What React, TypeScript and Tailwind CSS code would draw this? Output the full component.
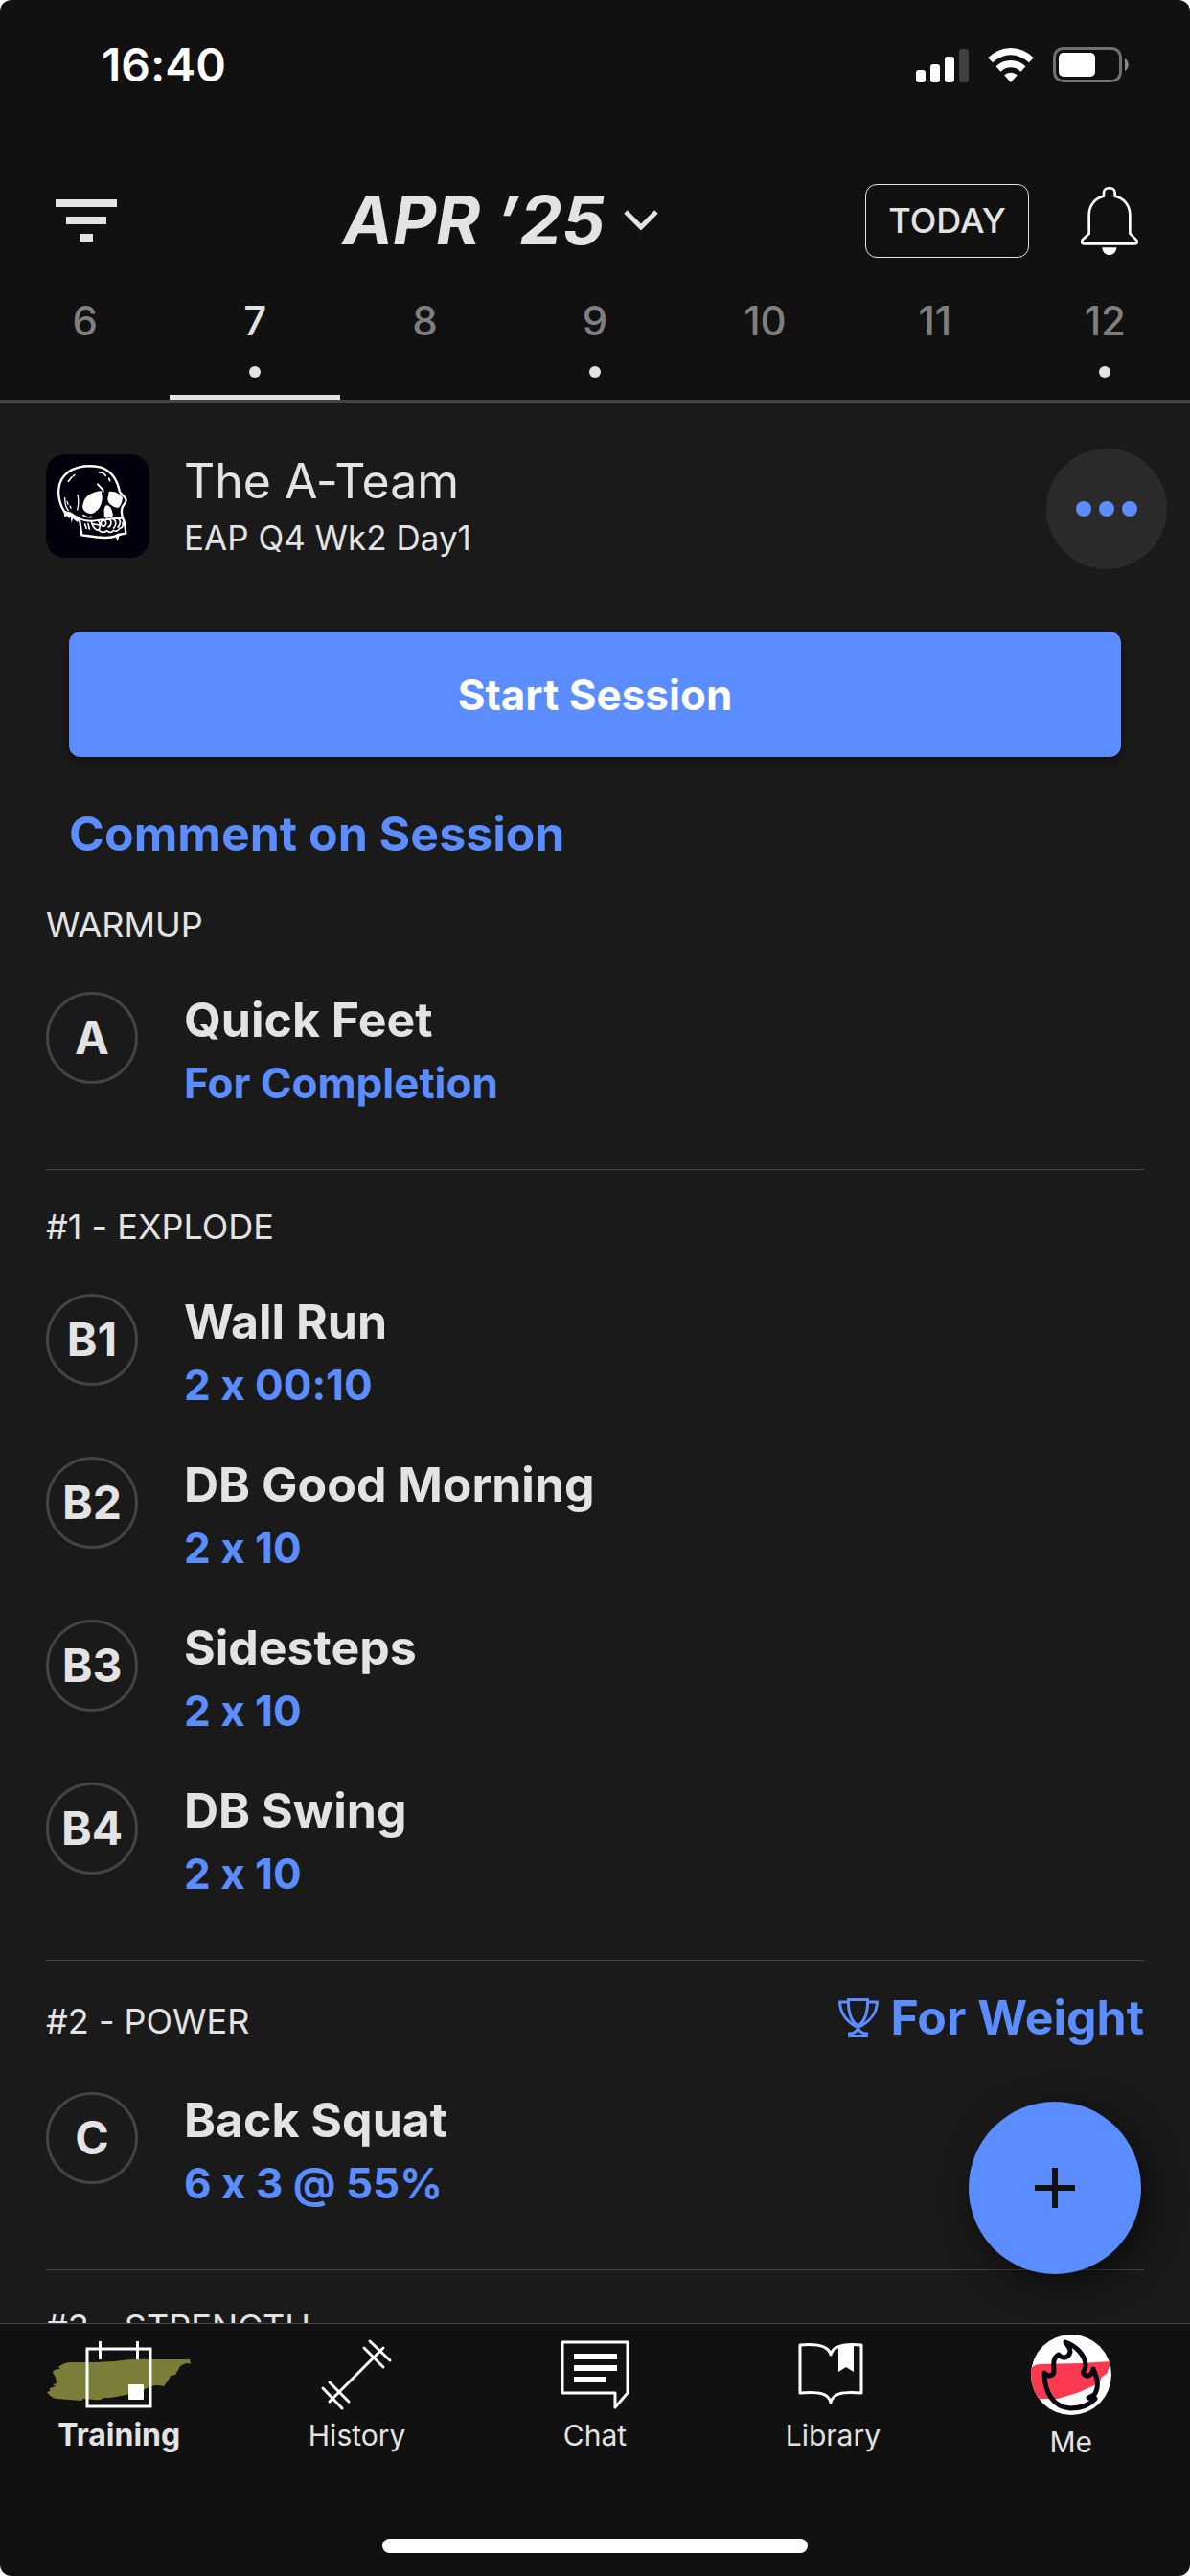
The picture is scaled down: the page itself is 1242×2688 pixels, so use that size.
import React, { useState } from 'react';

interface Exercise {
  code: string;
  name: string;
  detail: string;
}

interface Block {
  title: string;
  goal?: string;
  exercises: Exercise[];
}

const days = [
  { day: 6, hasSession: false },
  { day: 7, hasSession: true },
  { day: 8, hasSession: false },
  { day: 9, hasSession: true },
  { day: 10, hasSession: false },
  { day: 11, hasSession: false },
  { day: 12, hasSession: true },
];

const blocks: Block[] = [
  {
    title: 'WARMUP',
    exercises: [{ code: 'A', name: 'Quick Feet', detail: 'For Completion' }],
  },
  {
    title: '#1 - EXPLODE',
    exercises: [
      { code: 'B1', name: 'Wall Run', detail: '2 x 00:10' },
      { code: 'B2', name: 'DB Good Morning', detail: '2 x 10' },
      { code: 'B3', name: 'Sidesteps', detail: '2 x 10' },
      { code: 'B4', name: 'DB Swing', detail: '2 x 10' },
    ],
  },
  {
    title: '#2 - POWER',
    goal: 'For Weight',
    exercises: [{ code: 'C', name: 'Back Squat', detail: '6 x 3 @ 55%' }],
  },
  { title: '#3 - STRENGTH', exercises: [] },
];

function StatusBar() {
  return (
    <div className="flex h-[136px] shrink-0 items-center justify-between pl-[106px] pr-16 text-white">
      <span className="text-[48px] font-semibold leading-none">16:40</span>
      <div className="flex items-center gap-5">
        <svg width="55" height="36" viewBox="0 0 55 36" fill="currentColor">
          <rect x="0" y="23" width="10" height="13" rx="3" />
          <rect x="15" y="17" width="10" height="19" rx="3" />
          <rect x="30" y="9" width="10" height="27" rx="3" />
          <rect x="45" y="1" width="10" height="35" rx="3" fill="#404040" />
        </svg>
        <svg width="48" height="36" viewBox="395 57 143 108" fill="currentColor">
          <path d="M395 88 Q425 58 466 57 Q508 58 538 88 L523 103 Q498 80 466 79 Q435 80 410 103 Z" />
          <path d="M420 115 Q440 96 466 96 Q493 96 513 115 L498 131 Q484 118 466 118 Q449 118 435 131 Z" />
          <path d="M446 142 Q454 134 466 134 Q478 134 487 142 L466 165 Z" />
        </svg>
        <svg width="79" height="38" viewBox="0 0 79 38">
          <rect x="1.5" y="1.5" width="69" height="34" rx="9" fill="none" stroke="#717171" strokeWidth="3" />
          <rect x="6" y="6" width="38" height="25" rx="5" fill="#fff" />
          <path d="M75 12 C80 15 80 22 75 25 Z" fill="#8a8a8a" />
        </svg>
      </div>
    </div>
  );
}

function BellIcon() {
  return (
    <svg width="60" height="71" viewBox="684 498 180 213" fill="none">
      <path
        d="M756 527 V516 C756 497 791 497 791 516 V527 C819 533 838 556 838 586 V644 L858 664 C862 670 861 676 854 676 H694 C686 676 686 670 689 664 L710 644 V586 C710 556 729 533 756 527 Z"
        stroke="#fff"
        strokeWidth="8"
        strokeLinejoin="round"
      />
      <path d="M751 688 H796 C794 719 753 719 751 688 Z" fill="#fff" />
    </svg>
  );
}

function SkullLogo() {
  return (
    <svg className="mt-[6px] h-[108px] w-[108px] shrink-0 rounded-[20px] bg-[#03000e]" viewBox="18 18 324 324" fill="none">
      <g stroke="#fff" strokeWidth="7" strokeLinejoin="round" strokeLinecap="round">
        <path d="M118 217 C96 212 84 205 75 196 C56 168 52 125 66 98 C90 55 145 49 190 59 C222 70 241 99 248 133 C252 144 268 151 269 162 C269 172 259 176 256 187 C253 199 257 218 264 232 L268 266 L243 270 C220 286 174 277 130 271 L124 229 L112 214" />
        <path d="M118 217 C132 225 145 227 160 227 C180 228 190 220 204 224 C220 216 240 220 256 218" strokeWidth="6" />
        <path d="M160 228 C162 239 167 248 175 254 L184 256 C192 264 202 264 208 257 C216 265 226 263 229 256 C237 261 245 258 249 249 C257 250 260 240 258 232" strokeWidth="5" />
        <path d="M181 226 C190 233 187 246 184 256 M195 225 C212 225 207 243 197 244 C188 242 188 230 195 225 M214 222 C226 224 223 243 213 246 M229 222 C240 226 237 243 230 249 M245 221 C254 227 250 240 243 246 M163 236 L185 240" strokeWidth="5" />
        <path d="M88 103 L99 89 M104 86 L107 83 M185 75 C193 75 201 78 205 85 M215 93 L218 101" strokeWidth="5" />
        <path d="M117 145 C121 162 120 178 116 192 M77 155 C77 171 82 187 88 194 M84 166 L87 175 M93 180 L96 187" strokeWidth="4" />
        <path d="M180 112 L196 129 L197 135" strokeWidth="6" />
        <path d="M135 209 Q147 218 160 214 M140 237 L144 250 M150 236 L154 252" strokeWidth="5" />
      </g>
      <g fill="#fff">
        <path d="M135 170 C140 146 168 134 191 133 C197 155 193 174 186 184 C181 189 182 195 175 195 C168 208 146 207 136 193 C131 185 132 178 135 170 Z" />
        <path d="M215 135 C231 132 249 142 258 153 C257 167 251 185 242 186 C229 183 211 173 211 158 Z" />
        <path d="M205 179 C214 175 223 185 226 201 C231 211 224 218 216 213 C207 226 198 214 200 200 C199 190 201 183 205 179 Z" />
        <path d="M73 195 L77 216 L84 210 L90 219 L95 213 L98 233 L102 219 L116 231 L122 216 L94 199 Z" />
        <path d="M234 270 L242 291 L247 275 L253 270 Z" />
      </g>
    </svg>
  );
}

function TrophyIcon() {
  return (
    <svg width="42" height="41" viewBox="0 0 42 41" fill="none" stroke="currentColor" strokeWidth="3">
      <path d="M10.5 1.5 H30.5 C31 15 28 24 20.5 29 C13 24 10 15 10.5 1.5 Z" />
      <path d="M10.5 4 H1.5 C2 18 10 25 19 30 M30.5 4 H40.5 C40 18 31 25 22 30" />
      <path d="M20.5 28 V32 M20.5 31 C19 35 16 37 11.5 37 V39.5 H29.5 V37 C25 37 22 35 20.5 31 Z" />
    </svg>
  );
}

function TrainingIcon() {
  return (
    <svg width="150" height="84" viewBox="0 0 150 84" fill="none">
      <path
        d="M149 26 L150 31 Q146 29 143 31 Q139 32 138 35 L134 42 L129 43 L127 47 L122 54 Q115 52 109 54 L98 59 L86 62 L78 64 L66 66 L60 66 Q55 69 50 68 L38 67 L36 69 L10 67 Q4 66 0 60 L3 59 L3 56 L9 54 L6 52 L10 51 Q10 45 6 40 Q6 36 14 36 L12 34 Q18 29 26 29 L50 29 L70 28 Q90 25 109 26 Z"
        fill="#7b7d39"
      />
      <g stroke="#fff" strokeWidth="3">
        <rect x="42" y="15" width="66" height="60" />
        <path d="M55.5 7 V26 M94.5 7 V26" />
      </g>
      <rect x="85" y="52" width="16" height="16" rx="1" fill="#fff" />
    </svg>
  );
}

function HistoryIcon() {
  return (
    <svg width="84" height="84" viewBox="0 0 84 84" stroke="#fff" strokeWidth="3" strokeLinecap="round">
      <path d="M13 70 L69 14 M55 7 L76 27 M49 14 L69 34 M13 50 L33 70 M6 56 L26 77" />
    </svg>
  );
}

function ChatIcon() {
  return (
    <svg width="84" height="84" viewBox="0 0 84 84" fill="none" stroke="#fff" strokeLinejoin="round">
      <path d="M8 8 H76 V61 L63 76 V61 H8 Z" strokeWidth="3" />
      <path d="M20 23 H65 M20 35 H65 M20 47 H53" strokeWidth="6" />
    </svg>
  );
}

function LibraryIcon() {
  return (
    <svg width="84" height="84" viewBox="0 0 84 84" fill="none">
      <path
        d="M40 21 C38 13 29 9 8 11 V61 C29 59 38 62 40 71 C42 62 51 59 72 61 V11 C51 9 42 13 40 21 Z"
        stroke="#fff"
        strokeWidth="3"
        strokeLinejoin="round"
      />
      <path d="M48 11 L64 10 V39 L56 34 L48 39 Z" fill="#fff" />
    </svg>
  );
}

function ProfileAvatar() {
  return (
    <svg className="mb-[7px] rounded-full bg-white" width="84" height="84" viewBox="0 0 84 84" fill="none">
      <path d="M0 36 Q3 31 10 31 L52 30 L84 28 L79 41 L74 44 L71 51 L66 53 Q50 61 38 64 L28 67 L0 67 Z" fill="#fb3a51" />
      <path
        d="M36 8 C47 12 56 21 57 31 C58 37 53 38 55 41 C58 45 64 43 65 36 C69 45 72 54 66 63 L60 66 L67 67 C60 75 50 77 41 77 C24 76 14 61 14 40 C18 45 24 43 24 38 C24 31 22 25 29 21 C34 27 40 23 41 18 C41 13 38 12 36 8 Z"
        stroke="#07050f"
        strokeWidth="5"
        strokeLinejoin="round"
      />
    </svg>
  );
}

const tabs = [
  { label: 'Training', Icon: TrainingIcon },
  { label: 'History', Icon: HistoryIcon },
  { label: 'Chat', Icon: ChatIcon },
  { label: 'Library', Icon: LibraryIcon },
  { label: 'Me', Icon: ProfileAvatar },
];

function ExerciseRow({ code, name, detail }: Exercise) {
  return (
    <li className="flex items-start gap-12">
      <span className="flex h-24 w-24 shrink-0 items-center justify-center rounded-full border-[3px] border-[#444444] text-[48px] font-bold">
        {code}
      </span>
      <div className="flex flex-col gap-2 font-bold">
        <h3 className="text-[50px] leading-[58px]">{name}</h3>
        <p className="text-[44px] leading-[58px] text-[#5b8dff]">{detail}</p>
      </div>
    </li>
  );
}

function WorkoutBlock({ title, goal, exercises }: Block) {
  return (
    <section className="mx-12 border-t border-[#444444] pb-[61px] pt-[31px] first:border-transparent">
      <div className="mb-[42px] flex items-center justify-between">
        <h2 className="text-[36px] leading-[56px]">{title}</h2>
        {goal && (
          <span className="mb-2 flex items-center gap-3 text-[50px] font-bold leading-[56px] text-[#5b8dff]">
            <TrophyIcon />
            {goal}
          </span>
        )}
      </div>
      <ul className="flex flex-col gap-[46px]">
        {exercises.map((exercise) => (
          <ExerciseRow key={exercise.code} {...exercise} />
        ))}
      </ul>
    </section>
  );
}

export default function App() {
  const [selectedDay, setSelectedDay] = useState(7);
  const [activeTab, setActiveTab] = useState('Training');

  return (
    <div className="h-screen bg-white font-['Inter',sans-serif] text-[#e3e3e3] [font-variant-ligatures:no-contextual]">
      <div className="flex h-full flex-col overflow-hidden rounded-xl bg-[#111111]">
        <StatusBar />

        <header className="flex h-[156px] shrink-0 items-center pl-[58px] pr-[54px] pt-8">
          <button aria-label="Filter" className="flex w-16 flex-col items-center gap-[10px]">
            <span className="h-2 w-16 bg-current" />
            <span className="h-2 w-[42px] bg-current" />
            <span className="h-2 w-[14px] bg-current" />
          </button>
          <button className="flex flex-1 items-center justify-center gap-5 pl-5">
            <span className="text-[70px] font-bold italic leading-none">APR ’25</span>
            <svg width="36" height="22" viewBox="0 0 36 22" fill="none" stroke="currentColor" strokeWidth="5">
              <path d="M2 2 L18 18 L34 2" />
            </svg>
          </button>
          <button className="mr-[54px] h-[77px] w-[171px] rounded-xl border border-[#e3e3e3] text-[36px] font-medium">
            TODAY
          </button>
          <button aria-label="Notifications">
            <BellIcon />
          </button>
        </header>

        <div className="grid shrink-0 grid-cols-7 border-b-[3px] border-[#444444]">
          {days.map(({ day, hasSession }) => (
            <button
              key={day}
              onClick={() => setSelectedDay(day)}
              className={`flex flex-col items-center text-[42px] font-medium leading-[86px] ${day === selectedDay ? 'text-[#e3e3e3]' : 'text-[#7f7f7f]'}`}
            >
              {day}
              <span className={`mt-1 h-3 w-3 rounded-full ${hasSession ? 'bg-[#e3e3e3]' : 'bg-transparent'}`} />
              <span className={`mt-[18px] h-[5px] w-full ${day === selectedDay ? 'bg-[#e3e3e3]' : 'bg-transparent'}`} />
            </button>
          ))}
        </div>

        <div className="relative min-h-0 flex-1">
          <main className="h-full overflow-hidden bg-[#1a1a1a]">
            <div className="flex items-start pl-12 pr-6 pt-12">
              <SkullLogo />
              <div className="ml-9 mt-[6px] flex flex-1 flex-col gap-[3px]">
                <h1 className="text-[50px] leading-[56px]">The A-Team</h1>
                <p className="text-[35px] leading-[56px]">EAP Q4 Wk2 Day1</p>
              </div>
              <button
                aria-label="More options"
                className="flex h-[126px] w-[126px] shrink-0 items-center justify-center gap-2 rounded-full bg-[#2a2a2a]"
              >
                <span className="h-4 w-4 rounded-full bg-[#5b8dff]" />
                <span className="h-4 w-4 rounded-full bg-[#5b8dff]" />
                <span className="h-4 w-4 rounded-full bg-[#5b8dff]" />
              </button>
            </div>

            <div className="flex flex-col items-start px-[72px] pt-[65px]">
              <button className="h-[131px] w-full rounded-xl bg-[#5b8dff] text-[44px] font-bold text-white shadow-[0_4px_10px_rgba(0,0,0,0.4)]">
                Start Session
              </button>
              <button className="mt-12 pb-[3px] text-[50px] font-bold leading-[64px] text-[#5b8dff]">Comment on Session</button>
            </div>

            <div>
              {blocks.map((block) => (
                <WorkoutBlock key={block.title} {...block} />
              ))}
            </div>
          </main>

          <button
            aria-label="Add"
            className="absolute bottom-[51px] right-[51px] flex h-[180px] w-[180px] items-center justify-center rounded-full bg-[#5b8dff] shadow-[8px_10px_36px_rgba(0,0,0,0.6)]"
          >
            <svg width="42" height="42" viewBox="0 0 42 42" stroke="#111111" strokeWidth="6">
              <path d="M21 0 V42 M0 21 H42" />
            </svg>
          </button>
        </div>

        <footer className="flex h-[264px] shrink-0 flex-col items-center justify-between border-t border-[#444444] pb-6 pt-[11px]">
          <nav className="grid w-full grid-cols-5">
            {tabs.map(({ label, Icon }) => (
              <button
                key={label}
                onClick={() => setActiveTab(label)}
                className={`flex flex-col items-center leading-[42px] ${label === activeTab ? 'text-[32px] font-bold' : 'text-[30px] font-normal'}`}
              >
                <Icon />
                {label}
              </button>
            ))}
          </nav>
          <div className="h-[15px] w-[444px] rounded-full bg-white" />
        </footer>
      </div>
    </div>
  );
}
